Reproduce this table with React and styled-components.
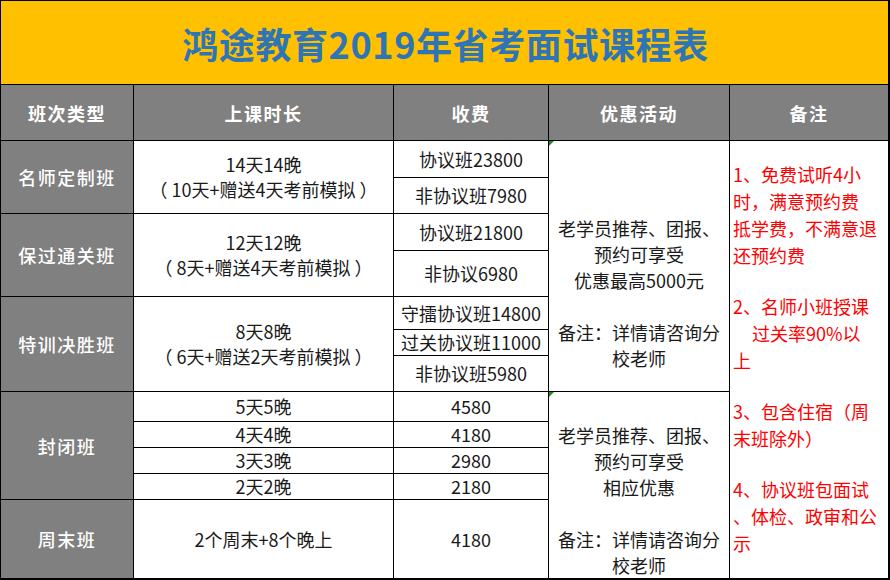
import React from "react";
import styled, { createGlobalStyle } from "styled-components";

const Global = createGlobalStyle`
  html, body { margin: 0; padding: 0; background: #ffffff; }
  body { font-family: "Noto Sans CJK SC", "Noto Sans", sans-serif; }
`;

const Sheet = styled.div`
  display: grid;
  width: 890px;
  height: 580px;
  box-sizing: border-box;
  background: #000;
  padding: 1px 2px 2px 1px;
  gap: 1px;
  grid-template-columns: 132px 259px 154px 180px 158px;
  grid-template-rows: 83px 55px 36px 35px 36px 45px 32px 25px 35px 29px 25px 25px 25px 78px;
  font-family: "Noto Sans CJK SC", "Noto Sans", sans-serif;
`;

const Title = styled.div`
  grid-column: 1 / -1;
  grid-row: 1;
  background: #ffc000;
  color: #2e75b6;
  font-size: 36px;
  font-weight: 700;
  display: flex;
  align-items: center;
  justify-content: center;
  letter-spacing: 0.6px;
  padding-left: 2px;
`;

const HeadCell = styled.div`
  grid-row: 2;
  grid-column: ${(p) => p.$col};
  background: #808080;
  color: #ffffff;
  font-size: 18px;
  font-weight: 700;
  letter-spacing: 1.5px;
  display: flex;
  align-items: center;
  justify-content: center;
`;

const TypeCell = styled.div`
  grid-column: 1;
  grid-row: ${(p) => p.$row};
  background: #808080;
  color: #ffffff;
  font-size: 18px;
  font-weight: 500;
  letter-spacing: 1.5px;
  display: flex;
  align-items: center;
  justify-content: center;
`;

const Cell = styled.div`
  grid-column: ${(p) => p.$col};
  grid-row: ${(p) => p.$row};
  background: #ffffff;
  color: #1a1a1a;
  font-size: 18px;
  line-height: 25px;
  display: flex;
  flex-direction: column;
  align-items: center;
  justify-content: center;
  text-align: center;
  white-space: pre;
  overflow: hidden;
`;

const PromoCell = styled.div`
  position: relative;
  grid-column: 4;
  grid-row: ${(p) => p.$row};
  background: #ffffff;
  color: #1a1a1a;
  font-size: 18px;
  line-height: 26px;
  display: flex;
  flex-direction: column;
  align-items: center;
  padding-top: ${(p) => p.$top}px;
  white-space: nowrap;
`;

const Flag = styled.span`
  position: absolute;
  left: 0;
  top: 0;
  width: 0;
  height: 0;
  border-top: 5px solid #1e8c1e;
  border-right: 5px solid transparent;
`;

const Line = styled.div`
  height: 26px;
`;

const RemarkCell = styled.div`
  grid-column: 5;
  grid-row: 3 / 15;
  background: #ffffff;
  color: #ff0000;
  font-size: 18px;
  line-height: 27px;
  padding: 20px 0 0 3px;
  white-space: nowrap;
  display: flex;
  flex-direction: column;
  gap: 24px;
`;

const Para = styled.div`
  display: flex;
  flex-direction: column;
`;

const RLine = styled.div`
  padding-left: ${(p) => p.$indent || 0}px;
`;

const headers = ["班次类型", "上课时长", "收费", "优惠活动", "备注"];

const types = [
  { name: "名师定制班", row: "3 / 5" },
  { name: "保过通关班", row: "5 / 7" },
  { name: "特训决胜班", row: "7 / 10" },
  { name: "封闭班", row: "10 / 14" },
  { name: "周末班", row: "14" },
];

const durations = [
  { row: "3 / 5", lines: ["14天14晚", "（ 10天+赠送4天考前模拟 ）"] },
  { row: "5 / 7", lines: ["12天12晚", "（ 8天+赠送4天考前模拟 ）"] },
  { row: "7 / 10", lines: ["8天8晚", "（ 6天+赠送2天考前模拟 ）"] },
  { row: "10", lines: ["5天5晚"] },
  { row: "11", lines: ["4天4晚"] },
  { row: "12", lines: ["3天3晚"] },
  { row: "13", lines: ["2天2晚"] },
  { row: "14", lines: ["2个周末+8个晚上"] },
];

const fees = [
  { row: "3", text: "协议班23800" },
  { row: "4", text: "非协议班7980" },
  { row: "5", text: "协议班21800" },
  { row: "6", text: "非协议6980" },
  { row: "7", text: "守擂协议班14800" },
  { row: "8", text: "过关协议班11000" },
  { row: "9", text: "非协议班5980" },
  { row: "10", text: "4580" },
  { row: "11", text: "4180" },
  { row: "12", text: "2980" },
  { row: "13", text: "2180" },
  { row: "14", text: "4180" },
];

const promos = [
  {
    row: "3 / 10",
    top: 74,
    lines: ["老学员推荐、团报、", "预约可享受", "优惠最高5000元", "", "备注：详情请咨询分", "校老师"],
  },
  {
    row: "10 / 15",
    top: 30,
    lines: ["老学员推荐、团报、", "预约可享受", "相应优惠", "", "备注：详情请咨询分", "校老师"],
  },
];

const remarks = [
  [["1、免费试听4小"], ["时，满意预约费"], ["抵学费，不满意退"], ["还预约费"]],
  [["2、名师小班授课"], ["过关率90%以", 19], ["上"]],
  [["3、包含住宿（周"], ["末班除外）"]],
  [["4、协议班包面试"], ["、体检、政审和公"], ["示"]],
];

export default function App() {
  return (
    <>
      <Global />
      <Sheet>
        <Title>鸿途教育2019年省考面试课程表</Title>
        {headers.map((h, i) => (
          <HeadCell key={h} $col={i + 1}>
            {h}
          </HeadCell>
        ))}
        {types.map((t) => (
          <TypeCell key={t.name} $row={t.row}>
            {t.name}
          </TypeCell>
        ))}
        {durations.map((d) => (
          <Cell key={d.row} $col={2} $row={d.row}>
            {d.lines.map((l) => (
              <div key={l}>{l}</div>
            ))}
          </Cell>
        ))}
        {fees.map((f) => (
          <Cell key={f.row} $col={3} $row={f.row}>
            {f.text}
          </Cell>
        ))}
        {promos.map((p) => (
          <PromoCell key={p.row} $row={p.row} $top={p.top}>
            <Flag />
            {p.lines.map((l, i) => (
              <Line key={i}>{l}</Line>
            ))}
          </PromoCell>
        ))}
        <RemarkCell>
          {remarks.map((para, i) => (
            <Para key={i}>
              {para.map(([text, indent]) => (
                <RLine key={text} $indent={indent}>
                  {text}
                </RLine>
              ))}
            </Para>
          ))}
        </RemarkCell>
      </Sheet>
    </>
  );
}
